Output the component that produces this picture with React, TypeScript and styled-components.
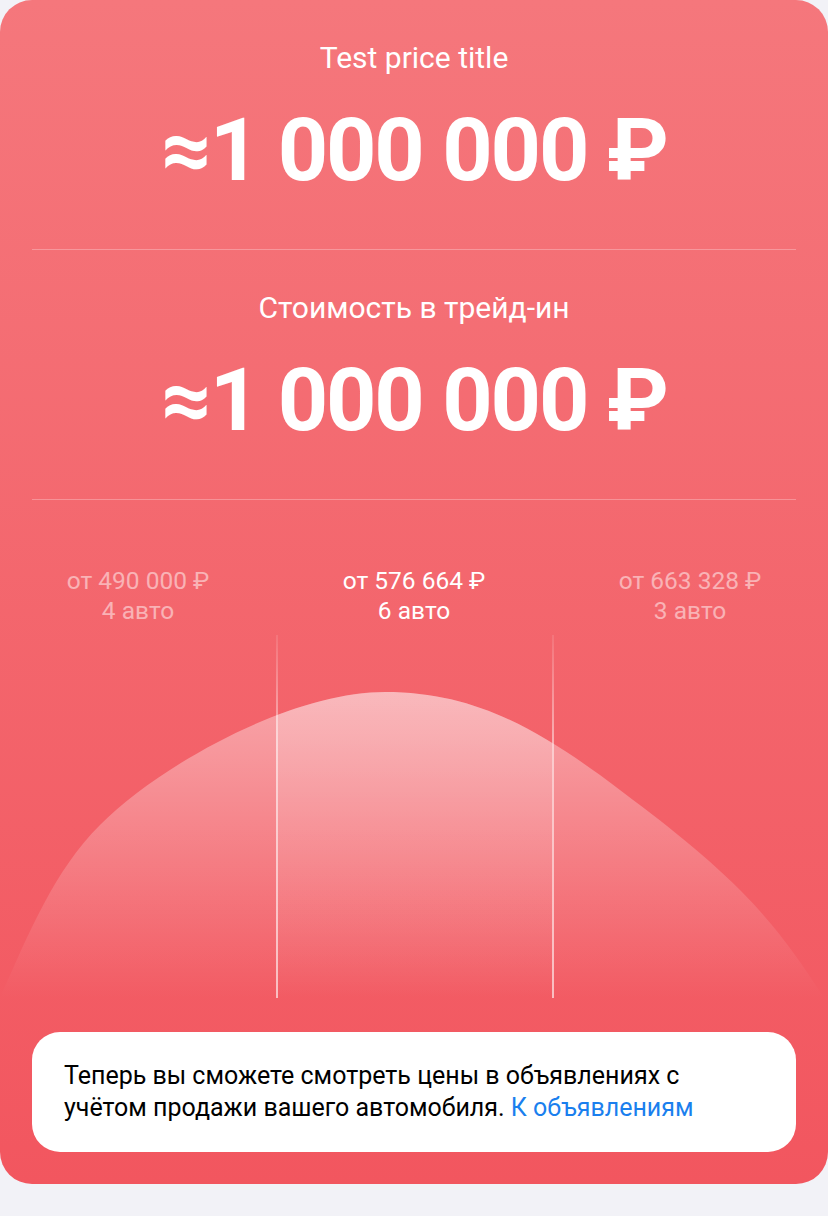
import React from 'react';
import styled, { createGlobalStyle } from 'styled-components';

const GlobalStyle = createGlobalStyle`
  html, body {
    margin: 0;
    padding: 0;
    background: #f2f2f7;
  }
  * {
    box-sizing: border-box;
  }
`;

const Page = styled.div`
  width: 828px;
  min-height: 1216px;
  background: #f2f2f7;
  font-family: Roboto, 'Noto Sans', Arial, sans-serif;
`;

const Card = styled.div`
  display: flex;
  flex-direction: column;
  width: 828px;
  border-radius: 32px;
  background: linear-gradient(180deg, #f5777c 0%, #f2565f 100%);
  padding-bottom: 32px;
  overflow: hidden;
`;

const PriceSection = styled.section`
  display: flex;
  flex-direction: column;
  align-items: center;
  gap: 24px;
  padding: 40px 0 49px;
  margin: 0 32px;
  border-bottom: 1px solid rgba(255, 255, 255, 0.28);
`;

const PriceTitle = styled.div`
  font-size: 30px;
  line-height: 36px;
  color: #ffffff;
`;

const PriceValue = styled.div`
  font-size: 88px;
  line-height: 100px;
  font-weight: 700;
  letter-spacing: -2.2px;
  color: #ffffff;
  white-space: nowrap;
`;

const ChartSection = styled.section`
  display: flex;
  flex-direction: column;
  padding-top: 66px;
`;

const Labels = styled.div`
  display: grid;
  grid-template-columns: repeat(3, 1fr);
`;

const Label = styled.div<{ $active?: boolean }>`
  text-align: center;
  font-size: 24.5px;
  line-height: 30px;
  color: ${(p) => (p.$active ? '#ffffff' : 'rgba(255, 255, 255, 0.5)')};
`;

const Chart = styled.svg`
  display: block;
  width: 828px;
  height: 363px;
  margin-top: 9px;
`;

const Notice = styled.div`
  margin: 34px 32px 0;
  padding: 28px 32px;
  background: #ffffff;
  border-radius: 28px;
  font-size: 25px;
  line-height: 32px;
  color: #000000;
`;

const NoticeLink = styled.a`
  color: #1a7fee;
  text-decoration: none;
`;

const prices = [
  { title: 'Test price title', value: '≈1 000 000 ₽' },
  { title: 'Стоимость в трейд-ин', value: '≈1 000 000 ₽' },
];

const buckets = [
  { from: 'от 490 000 ₽', count: '4 авто', active: false },
  { from: 'от 576 664 ₽', count: '6 авто', active: true },
  { from: 'от 663 328 ₽', count: '3 авто', active: false },
];

const curve =
  'M 0 363 C 30 295, 55 235, 100 190 C 160 130, 290 57, 385 57 C 470 57, 530 90, 600 140 C 660 185, 700 215, 740 255 C 775 290, 800 325, 824 363 Z';

const App = () => {
  return (
    <Page>
      <GlobalStyle />
      <Card>
        {prices.map((p, i) => (
          <PriceSection key={i}>
            <PriceTitle>{p.title}</PriceTitle>
            <PriceValue>{p.value}</PriceValue>
          </PriceSection>
        ))}
        <ChartSection>
          <Labels>
            {buckets.map((b) => (
              <Label key={b.from} $active={b.active}>
                {b.from}
                <br />
                {b.count}
              </Label>
            ))}
          </Labels>
          <Chart viewBox="0 0 828 363">
            <defs>
              <linearGradient id="curveFill" x1="0" y1="57" x2="0" y2="363" gradientUnits="userSpaceOnUse">
                <stop offset="0" stopColor="#ffffff" stopOpacity="0.42" />
                <stop offset="1" stopColor="#ffffff" stopOpacity="0" />
              </linearGradient>
              <linearGradient id="bandFill" x1="0" y1="57" x2="0" y2="363" gradientUnits="userSpaceOnUse">
                <stop offset="0" stopColor="#ffffff" stopOpacity="0.22" />
                <stop offset="1" stopColor="#ffffff" stopOpacity="0" />
              </linearGradient>
              <linearGradient id="lineFill" x1="0" y1="0" x2="0" y2="363" gradientUnits="userSpaceOnUse">
                <stop offset="0" stopColor="#ffffff" stopOpacity="0.1" />
                <stop offset="0.3" stopColor="#ffffff" stopOpacity="0.5" />
                <stop offset="1" stopColor="#ffffff" stopOpacity="0.6" />
              </linearGradient>
              <clipPath id="band">
                <rect x="276" y="0" width="276" height="363" />
              </clipPath>
            </defs>
            <path d={curve} fill="url(#curveFill)" />
            <path d={curve} fill="url(#bandFill)" clipPath="url(#band)" />
            <rect x="276" y="0" width="2" height="363" fill="url(#lineFill)" />
            <rect x="552" y="0" width="2" height="363" fill="url(#lineFill)" />
          </Chart>
        </ChartSection>
        <Notice>
          Теперь вы сможете смотреть цены в объявлениях с учётом продажи вашего автомобиля.{' '}
          <NoticeLink href="#">К объявлениям</NoticeLink>
        </Notice>
      </Card>
    </Page>
  );
};

export default App;
